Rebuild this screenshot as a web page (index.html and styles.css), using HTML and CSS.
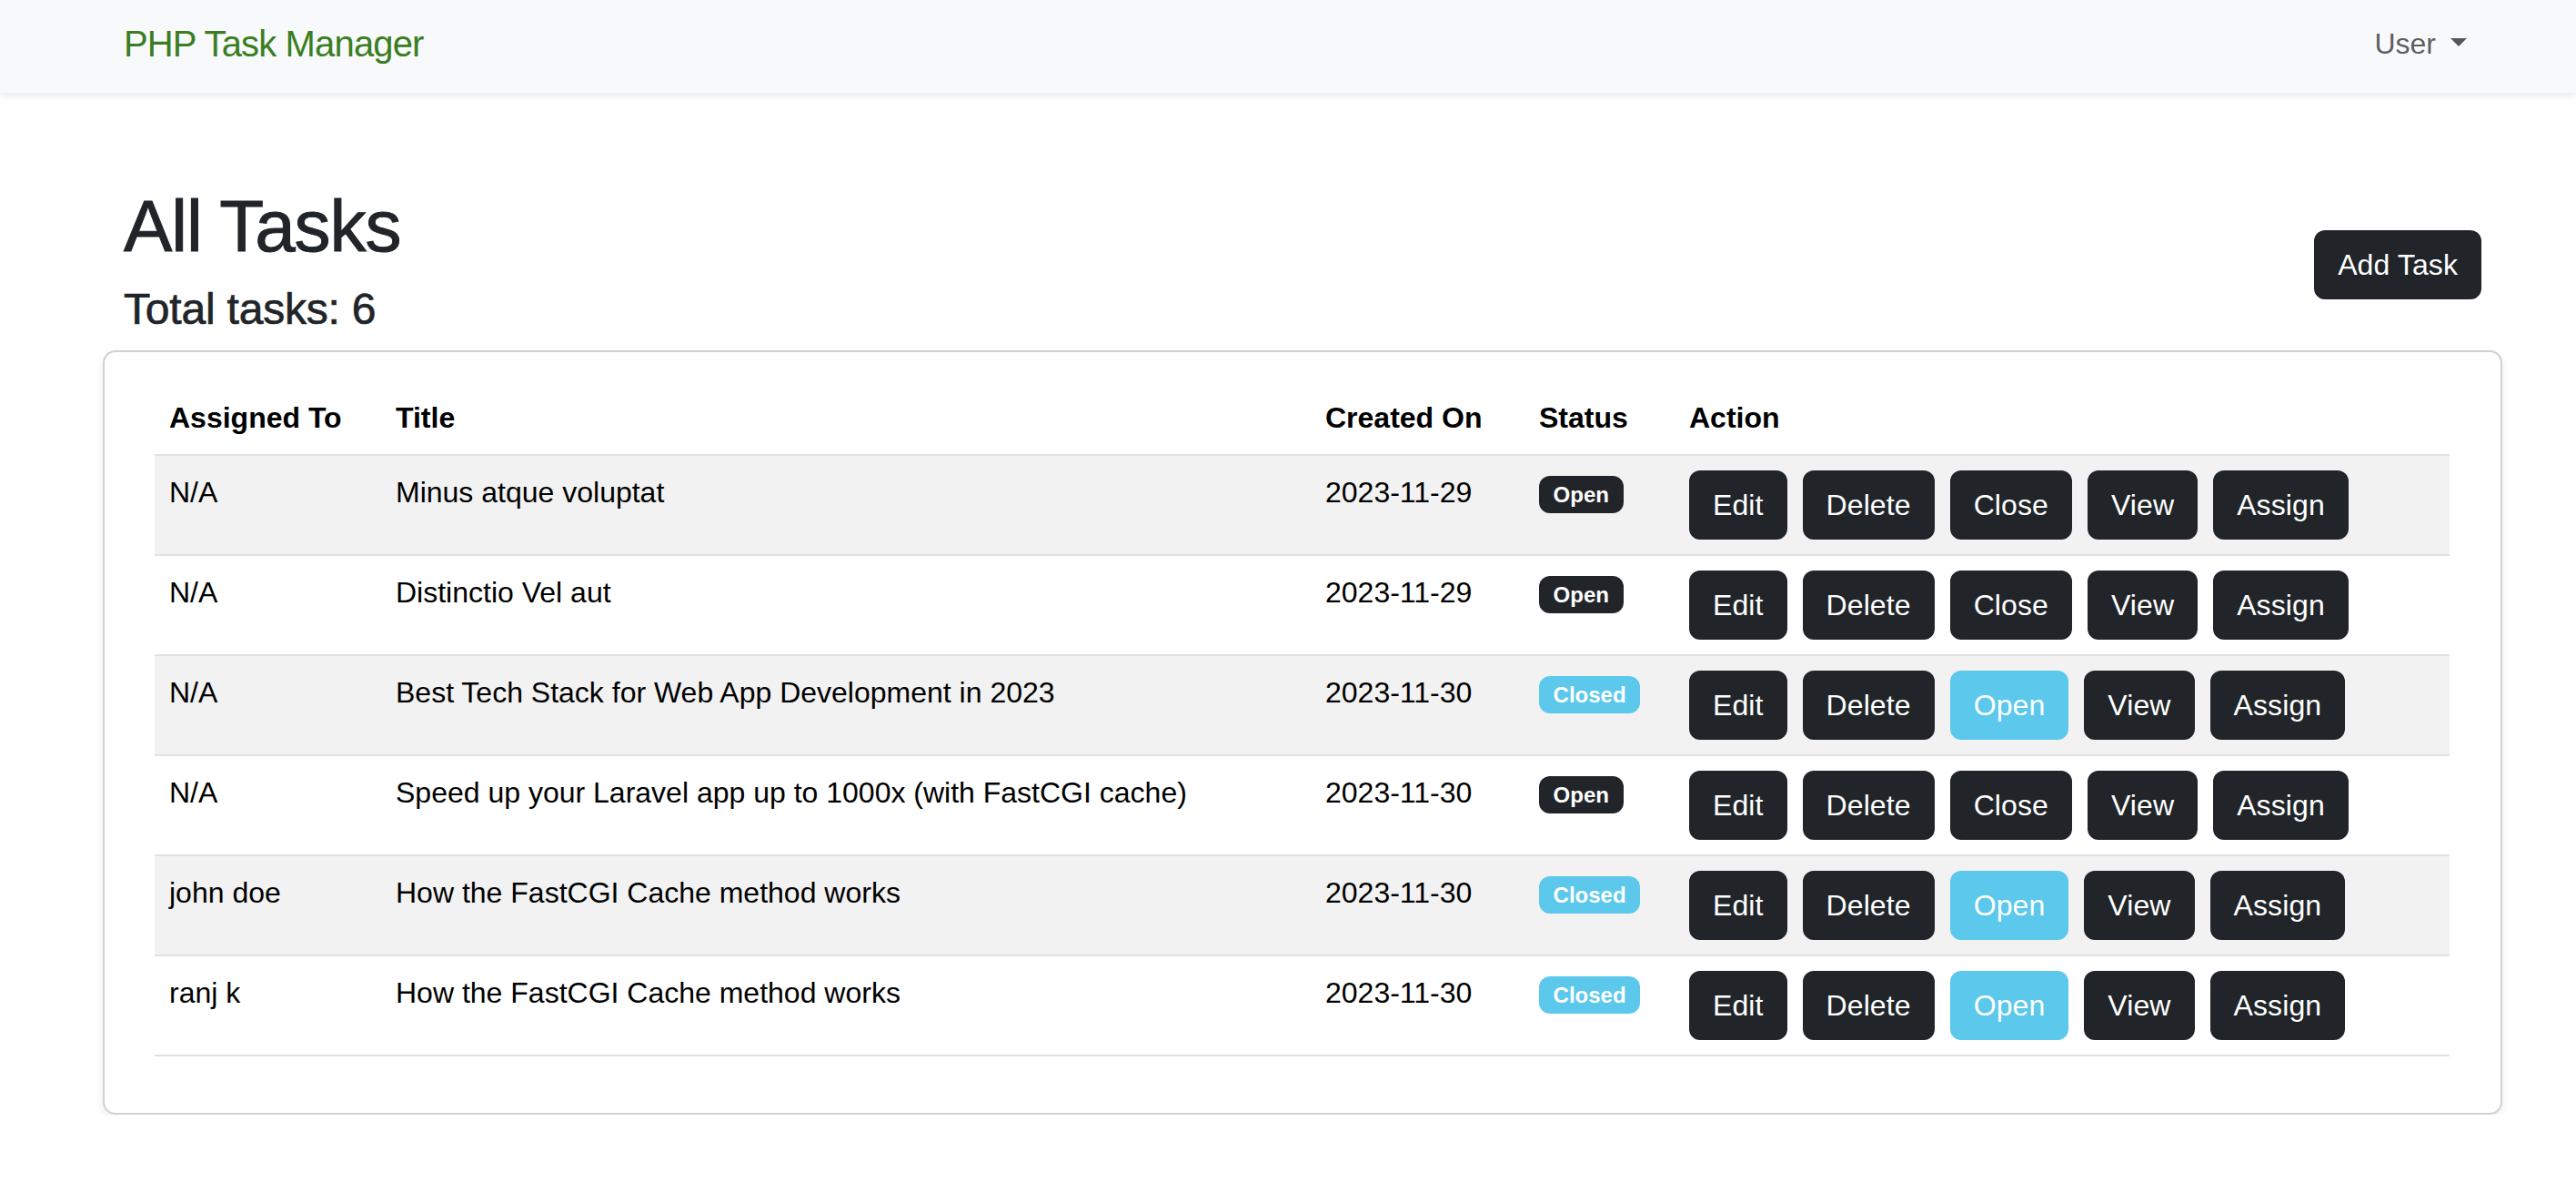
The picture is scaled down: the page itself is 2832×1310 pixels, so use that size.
FILE: index.html
```html
<!DOCTYPE html>
<html lang="en">
<head>
<meta charset="utf-8">
<title>PHP Task Manager</title>
<link rel="stylesheet" href="styles.css">
</head>
<body>
<nav class="navbar">
  <div class="nav-inner">
    <a class="brand" href="#">PHP Task Manager</a>
    <a class="user-toggle" href="#">User<span class="caret"></span></a>
  </div>
</nav>
<main class="page">
  <div class="page-head">
    <div class="head-text">
      <h1 class="title">All Tasks</h1>
      <h4 class="subtitle">Total tasks: 6</h4>
    </div>
    <a class="btn btn-dark btn-add" href="#">Add Task</a>
  </div>
  <div class="card">
    <div class="card-body">
      <table class="tasks">
        <colgroup>
          <col class="c-assigned">
          <col class="c-title">
          <col class="c-created">
          <col class="c-status">
          <col class="c-action">
        </colgroup>
        <thead>
          <tr><th>Assigned To</th><th>Title</th><th>Created On</th><th>Status</th><th>Action</th></tr>
        </thead>
        <tbody>
          <tr>
            <td>N/A</td><td>Minus atque voluptat</td><td>2023-11-29</td>
            <td><span class="badge badge-dark">Open</span></td>
            <td><div class="actions"><a class="btn btn-dark" href="#">Edit</a><a class="btn btn-dark" href="#">Delete</a><a class="btn btn-dark" href="#">Close</a><a class="btn btn-dark" href="#">View</a><a class="btn btn-dark" href="#">Assign</a></div></td>
          </tr>
          <tr>
            <td>N/A</td><td>Distinctio Vel aut</td><td>2023-11-29</td>
            <td><span class="badge badge-dark">Open</span></td>
            <td><div class="actions"><a class="btn btn-dark" href="#">Edit</a><a class="btn btn-dark" href="#">Delete</a><a class="btn btn-dark" href="#">Close</a><a class="btn btn-dark" href="#">View</a><a class="btn btn-dark" href="#">Assign</a></div></td>
          </tr>
          <tr>
            <td>N/A</td><td>Best Tech Stack for Web App Development in 2023</td><td>2023-11-30</td>
            <td><span class="badge badge-info">Closed</span></td>
            <td><div class="actions"><a class="btn btn-dark" href="#">Edit</a><a class="btn btn-dark" href="#">Delete</a><a class="btn btn-info" href="#">Open</a><a class="btn btn-dark" href="#">View</a><a class="btn btn-dark" href="#">Assign</a></div></td>
          </tr>
          <tr>
            <td>N/A</td><td>Speed up your Laravel app up to 1000x (with FastCGI cache)</td><td>2023-11-30</td>
            <td><span class="badge badge-dark">Open</span></td>
            <td><div class="actions"><a class="btn btn-dark" href="#">Edit</a><a class="btn btn-dark" href="#">Delete</a><a class="btn btn-dark" href="#">Close</a><a class="btn btn-dark" href="#">View</a><a class="btn btn-dark" href="#">Assign</a></div></td>
          </tr>
          <tr>
            <td>john doe</td><td>How the FastCGI Cache method works</td><td>2023-11-30</td>
            <td><span class="badge badge-info">Closed</span></td>
            <td><div class="actions"><a class="btn btn-dark" href="#">Edit</a><a class="btn btn-dark" href="#">Delete</a><a class="btn btn-info" href="#">Open</a><a class="btn btn-dark" href="#">View</a><a class="btn btn-dark" href="#">Assign</a></div></td>
          </tr>
          <tr>
            <td>ranj k</td><td>How the FastCGI Cache method works</td><td>2023-11-30</td>
            <td><span class="badge badge-info">Closed</span></td>
            <td><div class="actions"><a class="btn btn-dark" href="#">Edit</a><a class="btn btn-dark" href="#">Delete</a><a class="btn btn-info" href="#">Open</a><a class="btn btn-dark" href="#">View</a><a class="btn btn-dark" href="#">Assign</a></div></td>
          </tr>
        </tbody>
      </table>
    </div>
  </div>
</main>
</body>
</html>
```
FILE: styles.css
```css
* { box-sizing: border-box; }
html, body { margin: 0; padding: 0; }
body {
  font-family: "Liberation Sans", Arial, sans-serif;
  font-size: 32px;
  line-height: 1.5;
  color: #212529;
  background: #fff;
}

/* Navbar */
.navbar {
  position: relative;
  z-index: 1;
  height: 102px;
  background: #f8f9fa;
  box-shadow: 0 4px 8px rgba(0, 0, 0, 0.075);
}
.nav-inner {
  width: 2592px;
  margin-left: 136px;
  height: 100%;
  padding-bottom: 6px;
  display: flex;
  align-items: center;
  justify-content: space-between;
}
.brand {
  font-size: 40px;
  line-height: 60px;
  letter-spacing: -0.85px;
  color: #3a7d22;
  text-decoration: none;
}
.user-toggle {
  font-size: 32px;
  line-height: 48px;
  padding-right: 16px;
  color: rgba(0, 0, 0, 0.65);
  text-decoration: none;
}
.caret {
  display: inline-block;
  margin-left: 16px;
  vertical-align: 0.255em;
  width: 0;
  height: 0;
  border-top: 9.6px solid currentColor;
  border-left: 9.6px solid transparent;
  border-right: 9.6px solid transparent;
}

/* Page */
.page {
  width: 2592px;
  margin-left: 136px;
  padding-top: 99px;
}
.page-head {
  display: flex;
  justify-content: space-between;
  align-items: flex-start;
}
.title {
  margin: 0 0 14px;
  font-size: 80px;
  line-height: 96px;
  font-weight: 400;
  letter-spacing: -1.1px;
  -webkit-text-stroke: 1px #212529;
}
.subtitle {
  margin: 0 0 16px;
  font-size: 48px;
  line-height: 57.6px;
  font-weight: 400;
  letter-spacing: -0.2px;
  -webkit-text-stroke: 0.7px #212529;
}
.btn-add {
  margin-top: 52px;
}

/* Buttons */
.btn {
  display: inline-block;
  padding: 12px 24px;
  border: 2px solid transparent;
  border-radius: 12px;
  font-size: 32px;
  line-height: 48px;
  letter-spacing: 0.1px;
  text-decoration: none;
  white-space: nowrap;
  color: #fff;
}
.btn-dark { background: #212529; border-color: #212529; }
.btn-info { background: #5cc8ec; border-color: #5cc8ec; }

/* Card */
.card {
  margin: 0 -23px;
  border: 2px solid rgba(0, 0, 0, 0.175);
  border-radius: 14px;
  background: #fff;
  box-shadow: 0 4px 10px rgba(0, 0, 0, 0.08);
}
.card-body {
  padding: 32px 56px 30px 55px;
}

/* Table */
.tasks {
  width: 100%;
  table-layout: fixed;
  border-collapse: collapse;
  margin-bottom: 32px;
  color: #000;
  vertical-align: top;
}
.c-assigned { width: 249px; }
.c-title { width: 1022px; }
.c-created { width: 235px; }
.c-status { width: 165px; }
.c-action { width: 852px; }
.tasks th,
.tasks td {
  padding: 16px;
  text-align: left;
  vertical-align: top;
  border-bottom: 2px solid #dee2e6;
}
.tasks th { font-weight: 700; }
.tasks tbody tr:nth-child(odd) td { background: #f2f2f2; }

.actions {
  display: flex;
  gap: 17px;
}

/* Badges */
.badge {
  display: inline-block;
  padding: 0.35em 0.65em;
  font-size: 24px;
  font-weight: 700;
  line-height: 1;
  color: #fff;
  border-radius: 12px;
  white-space: nowrap;
  vertical-align: baseline;
}
.badge-dark { background: #212529; }
.badge-info { background: #5cc8ec; }
```
